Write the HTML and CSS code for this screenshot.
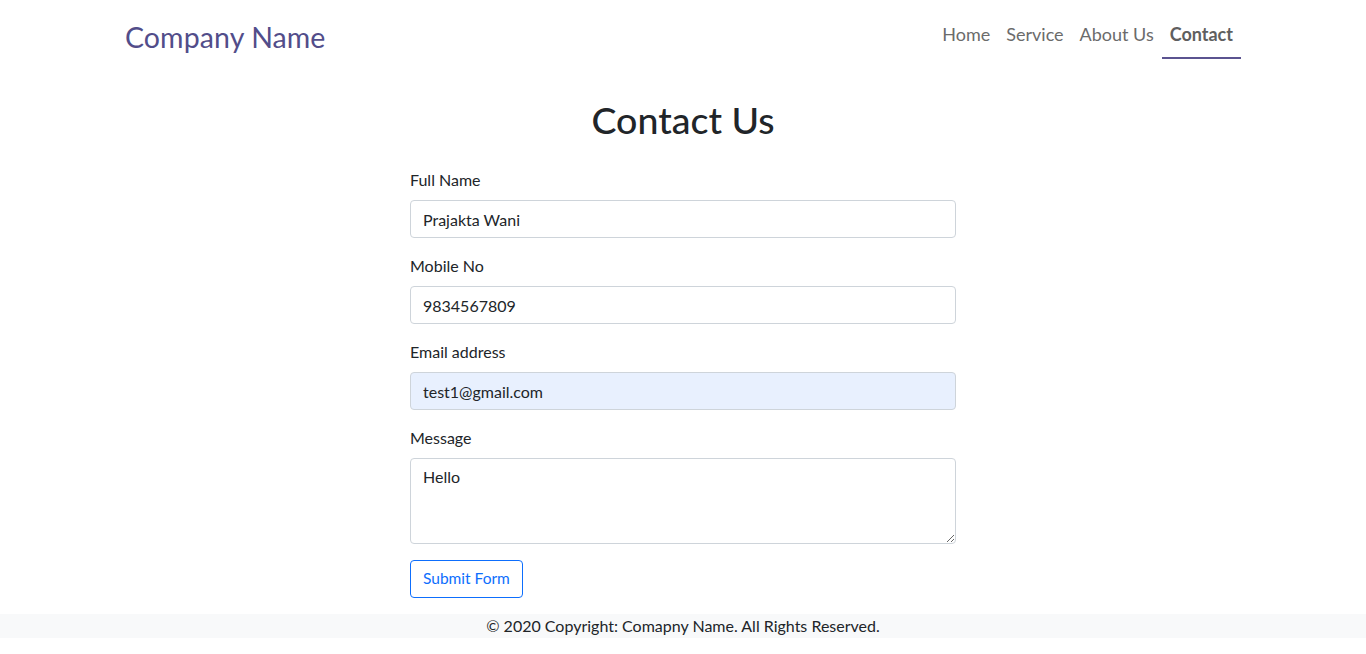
FILE: index.html
```html
<!DOCTYPE html>
<html lang="en">
<head>
<meta charset="utf-8">
<title>Contact</title>
<link rel="stylesheet" href="styles.css">
</head>
<body>
<header class="navbar">
  <div class="container nav-inner">
    <a class="brand" href="#">Company Name</a>
    <nav class="nav-links">
      <a href="#">Home</a>
      <a href="#">Service</a>
      <a href="#">About Us</a>
      <a href="#" class="active">Contact</a>
    </nav>
  </div>
</header>
<main class="container">
  <h1 class="title">Contact Us</h1>
  <form class="form">
    <div class="field">
      <label>Full Name</label>
      <input class="control" type="text" value="Prajakta Wani">
    </div>
    <div class="field">
      <label>Mobile No</label>
      <input class="control" type="text" value="9834567809">
    </div>
    <div class="field">
      <label>Email address</label>
      <input class="control autofill" type="email" value="test1@gmail.com">
    </div>
    <div class="field">
      <label>Message</label>
      <textarea class="control area">Hello</textarea>
    </div>
    <button type="button" class="btn">Submit Form</button>
  </form>
</main>
<footer class="footer">© 2020 Copyright: Comapny Name. All Rights Reserved.</footer>
</body>
</html>
```

FILE: styles.css
```css
* { box-sizing: border-box; }
body {
  margin: 0;
  font-family: "Lato", "Open Sans", sans-serif;
  font-size: 16px;
  line-height: 1.5;
  color: #212529;
  background: #fff;
}
.container {
  width: 1140px;
  margin: 0 auto;
  padding: 0 12px;
}
.navbar { padding-top: 14px; }
.nav-inner {
  display: flex;
  justify-content: space-between;
  align-items: flex-start;
}
.brand {
  font-size: 28.5px;
  line-height: 1.2;
  color: #524d8a;
  text-decoration: none;
  padding-top: 6px;
  letter-spacing: 0.1px;
}
.nav-links { display: flex; }
.nav-links a {
  font-size: 18px;
  line-height: 27px;
  color: #6b6b6b;
  text-decoration: none;
  padding: 7px 8px 9px;
  border-bottom: 2px solid transparent;
}
.nav-links a.active {
  font-weight: 700;
  color: #5f5f5f;
  border-bottom-color: #5b5390;
}
.title {
  text-align: center;
  font-size: 37.5px;
  font-weight: 500;
  line-height: 1.2;
  margin: 38px 0 26px;
}
.form {
  width: 546px;
  margin: 0 auto;
}
.field { margin-bottom: 16px; }
label {
  display: block;
  margin-bottom: 8px;
}
.control {
  display: block;
  width: 100%;
  height: 38px;
  padding: 6px 12px;
  font: inherit;
  color: #212529;
  border: 1px solid #ced4da;
  border-radius: 4px;
  background: #fff;
}
.autofill { background: #e8f0fe; }
.area {
  height: 86px;
  resize: vertical;
}
.btn {
  font: inherit;
  font-size: 15.5px;
  color: #0d6efd;
  background: #fff;
  border: 1px solid #0d6efd;
  border-radius: 4px;
  height: 38px;
  padding: 6px 12px;
}
.footer {
  margin-top: 16px;
  background: #f8f9fa;
  text-align: center;
  height: 24px;
  line-height: 24px;
}
```
